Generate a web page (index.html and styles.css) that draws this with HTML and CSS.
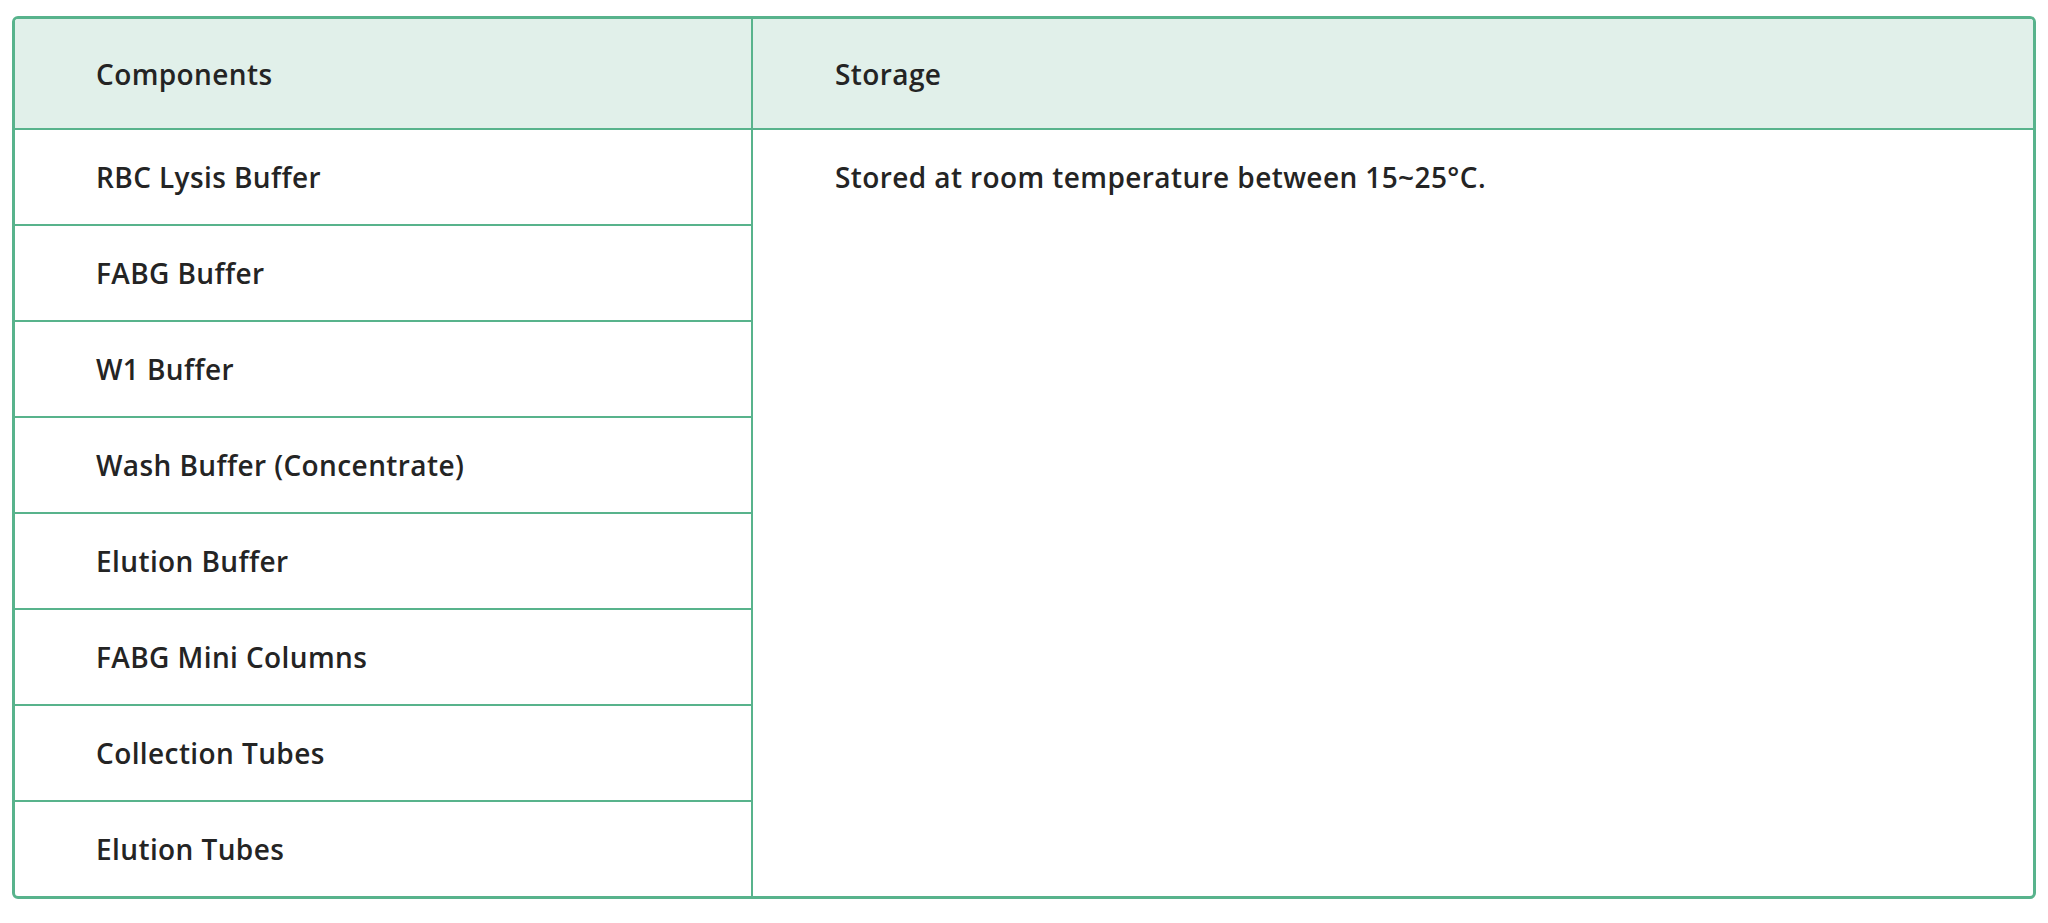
FILE: index.html
```html
<!DOCTYPE html>
<html lang="en">
<head>
<meta charset="utf-8">
<title>Components and Storage</title>
<link rel="stylesheet" href="styles.css">
</head>
<body>
<div class="table">
  <div class="cell head col1">Components</div>
  <div class="cell head col2">Storage</div>
  <div class="cell item">RBC Lysis Buffer</div>
  <div class="storage"><div class="storage-text">Stored at room temperature between 15~25°C.</div></div>
  <div class="cell item">FABG Buffer</div>
  <div class="cell item">W1 Buffer</div>
  <div class="cell item">Wash Buffer (Concentrate)</div>
  <div class="cell item">Elution Buffer</div>
  <div class="cell item">FABG Mini Columns</div>
  <div class="cell item">Collection Tubes</div>
  <div class="cell item last">Elution Tubes</div>
</div>
</body>
</html>
```

FILE: styles.css
```css
html, body {
  margin: 0;
  padding: 0;
  background: #ffffff;
}
body {
  font-family: "Open Sans", "Noto Sans", sans-serif;
  font-weight: 600;
  font-size: 28px;
  letter-spacing: 0.4px;
  color: #242424;
  padding: 16px 12px 0 12px;
}
.table {
  box-sizing: border-box;
  width: 2024px;
  border: 3px solid #58b38c;
  border-radius: 6px;
  overflow: hidden;
  display: grid;
  grid-template-columns: 738px 1fr;
  grid-template-rows: 111px repeat(7, 96px) 94px;
}
.cell {
  box-sizing: border-box;
  display: flex;
  align-items: center;
  padding-left: 81px;
}
.head {
  background: #e1f0ea;
  border-bottom: 2px solid #58b38c;
}
.head.col1 {
  border-right: 2px solid #58b38c;
}
.head.col2 {
  padding-left: 82px;
}
.item {
  grid-column: 1;
  border-right: 2px solid #58b38c;
  border-bottom: 2px solid #58b38c;
}
.item.last {
  border-bottom: none;
}
.storage {
  grid-column: 2;
  grid-row: 2 / span 8;
  padding-left: 82px;
}
.storage-text {
  height: 94px;
  display: flex;
  align-items: center;
}
```
